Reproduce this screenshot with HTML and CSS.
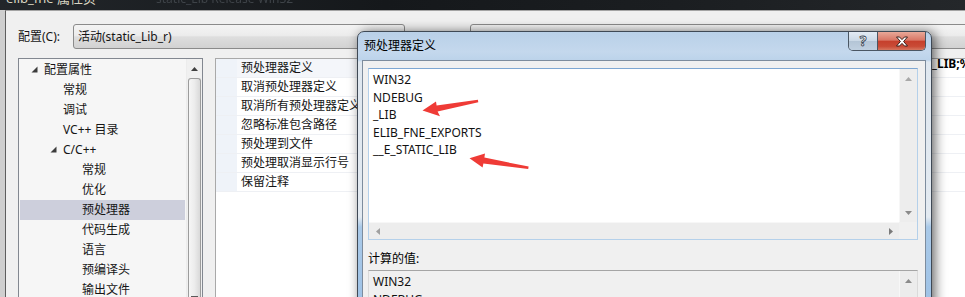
FILE: index.html
```html
<!DOCTYPE html>
<html lang="zh-CN">
<head>
<meta charset="utf-8">
<title>预处理器定义</title>
<link rel="stylesheet" href="styles.css">
</head>
<body>
<div class="titlebar">
  <span class="tb-text">elib_fne 属性页</span>
  <span class="tb-faint">static_Lib  Release  Win32</span>
</div>
<div class="window">
  <div class="config-row">
    <span class="config-label">配置(C):</span>
    <div class="combo cfg">活动(static_Lib_r)</div>
    <div class="combo plat"></div>
  </div>
  <div class="panels">
    <div class="tree">
      <div class="tree-list">
        <div class="trow l1"><span class="tog"><svg width="7" height="7" viewBox="0 0 7 7"><polygon points="6.5,0.5 6.5,6.5 0.5,6.5" fill="#3c3c3c"/></svg></span>配置属性</div>
        <div class="trow l2">常规</div>
        <div class="trow l2">调试</div>
        <div class="trow l2">VC++ 目录</div>
        <div class="trow l2t"><span class="tog"><svg width="7" height="7" viewBox="0 0 7 7"><polygon points="6.5,0.5 6.5,6.5 0.5,6.5" fill="#3c3c3c"/></svg></span>C/C++</div>
        <div class="trow l3">常规</div>
        <div class="trow l3">优化</div>
        <div class="trow l3 sel">预处理器</div>
        <div class="trow l3">代码生成</div>
        <div class="trow l3">语言</div>
        <div class="trow l3">预编译头</div>
        <div class="trow l3">输出文件</div>
      </div>
      <div class="tree-scroll">
        <div class="sb-arrow"><svg width="7" height="4" viewBox="0 0 7 4"><polygon points="0,4 3.5,0 7,4" fill="#404040"/></svg></div>
        <div class="thumb"><div class="grip"><i></i><i></i><i></i></div></div>
      </div>
    </div>
    <div class="splitter"></div>
    <div class="grid">
      <div class="prow first"><span class="gut"></span><span class="pname">预处理器定义</span><span class="pval">_LIB;%(PreprocessorDefinitions)</span></div>
      <div class="prow"><span class="gut"></span><span class="pname">取消预处理器定义</span></div>
      <div class="prow"><span class="gut"></span><span class="pname">取消所有预处理器定义</span></div>
      <div class="prow"><span class="gut"></span><span class="pname">忽略标准包含路径</span></div>
      <div class="prow"><span class="gut"></span><span class="pname">预处理到文件</span></div>
      <div class="prow"><span class="gut"></span><span class="pname">预处理取消显示行号</span></div>
      <div class="prow"><span class="gut"></span><span class="pname">保留注释</span></div>
    </div>
  </div>
</div>

<div class="dialog">
  <div class="dtitlebar">
    <span class="dtitle">预处理器定义</span>
    <div class="capbtns">
      <div class="cb help">?</div>
      <div class="cb close"><svg width="16" height="11" viewBox="0 0 16 11"><path d="M2.5 1 L5.5 1 L8 3.6 L10.5 1 L13.5 1 L9.6 5.5 L13.5 10 L10.5 10 L8 7.4 L5.5 10 L2.5 10 L6.4 5.5 Z" fill="#ffffff" stroke="#3a1f1a" stroke-width="1" stroke-linejoin="round"/></svg></div>
    </div>
  </div>
  <div class="client">
    <div class="edit">
      <div class="edit-text">
        <div>WIN32</div>
        <div>NDEBUG</div>
        <div>_LIB</div>
        <div>ELIB_FNE_EXPORTS</div>
        <div>__E_STATIC_LIB</div>
      </div>
      <div class="vscroll">
        <span class="arr"><svg width="7" height="4" viewBox="0 0 7 4"><polygon points="0,4 3.5,0 7,4" fill="#a8a8a8"/></svg></span>
        <span class="arr"><svg width="7" height="4" viewBox="0 0 7 4"><polygon points="0,0 7,0 3.5,4" fill="#8a8a8a"/></svg></span>
      </div>
      <div class="hscroll">
        <span class="arr"><svg width="4" height="7" viewBox="0 0 4 7"><polygon points="4,0 4,7 0,3.5" fill="#a0a0a0"/></svg></span>
        <span class="arr"><svg width="4" height="7" viewBox="0 0 4 7"><polygon points="0,0 4,3.5 0,7" fill="#7a7a7a"/></svg></span>
      </div>
      <div class="corner"></div>
    </div>
    <div class="calc-label">计算的值:</div>
    <div class="calc">
      <div class="calc-text">
        <div>WIN32</div>
        <div>NDEBUG</div>
        <div>_LIB</div>
      </div>
      <div class="vscroll2">
        <span class="arr"><svg width="7" height="4" viewBox="0 0 7 4"><polygon points="0,4 3.5,0 7,4" fill="#8a8a8a"/></svg></span>
      </div>
    </div>
  </div>
</div>

<svg class="marks" width="965" height="297" viewBox="0 0 965 297">
  <polygon points="422.5,110.5 436,101.6 436.6,105.4 477.9,99.8 478.3,102.2 437.6,111.4 440,116.2" fill="#ef3b36"/>
  <polygon points="469.5,158.3 485,153.6 484.4,157.6 528.6,166.6 528.2,169 483.4,163.4 482.6,167.4" fill="#ef3b36"/>
</svg>
</body>
</html>
```
FILE: styles.css
```css
* { box-sizing: border-box; }
html, body { margin: 0; }
body {
  width: 965px;
  height: 297px;
  overflow: hidden;
  position: relative;
  background: #cfcfcf;
  font-family: "Noto Sans", "Noto Sans CJK SC", sans-serif;
  font-size: 12px;
  color: #151515;
}

/* background window title bar */
.titlebar {
  height: 10px;
  overflow: hidden;
  background: linear-gradient(90deg, #22262a, #15181b 40%, #1b1e21 70%, #24272a);
  display: flex;
  white-space: nowrap;
}
.tb-text {
  display: block;
  margin: -10px 0 0 6px;
  line-height: 16px;
  font-size: 13px;
  color: #d9d5c2;
}
.tb-faint {
  display: block;
  margin: -9px 0 0 60px;
  line-height: 16px;
  font-size: 12px;
  color: #3e4348;
  filter: blur(0.6px);
}

.window {
  margin-left: 5px;
  height: 287px;
  border-left: 1px solid #5e5e5e;
  border-top: 1px solid #a4a4a4;
  background: #f0f0f0;
  padding: 13px 0 0 12px;
  overflow: hidden;
}

.config-row {
  display: flex;
  align-items: center;
  height: 25px;
  white-space: nowrap;
}
.config-label { width: 55px; flex: none; line-height: 25px; }
.combo {
  flex: none;
  height: 25px;
  border: 1px solid #8b8b8b;
  border-radius: 3px;
  background: linear-gradient(#f4f4f4, #ececec 45%, #dedede 52%, #d2d2d2);
  padding-left: 4px;
  line-height: 23px;
}
.combo.cfg { width: 332px; }
.combo.plat { width: 600px; margin-left: 65px; }

.panels {
  display: flex;
  margin-top: 9px;
  height: 260px;
}

/* tree */
.tree {
  width: 185px;
  flex: none;
  border: 1px solid #828790;
  background: #f6f6f6;
  display: flex;
}
.tree-list { flex: 1; padding: 1px 1px 0; }
.trow {
  height: 20px;
  line-height: 20px;
  display: flex;
  align-items: center;
  white-space: nowrap;
}
.trow.l1 { padding-left: 11px; }
.trow.l2 { padding-left: 43px; }
.trow.l2t { padding-left: 30px; }
.trow.l3 { padding-left: 62px; }
.trow.sel { background: #cdcfdc; }
.tog { width: 13px; flex: none; display: flex; align-items: center; padding-bottom: 2px; }

.tree-scroll {
  width: 16px;
  flex: none;
  background: #f0f0f0;
  border-left: 1px solid #ececec;
  display: flex;
  flex-direction: column;
  align-items: center;
}
.sb-arrow { height: 18px; display: flex; align-items: center; justify-content: center; padding-top: 2px; }
.thumb {
  width: 13px;
  flex: 1;
  margin-top: 1px;
  border: 1px solid #9c9c9c;
  border-bottom: none;
  border-radius: 3px 3px 0 0;
  background: linear-gradient(90deg, #f6f6f6, #ececec 50%, #d9d9d9);
  display: flex;
  flex-direction: column;
  align-items: center;
  justify-content: flex-end;
  padding-bottom: 14px;
}
.grip { display: flex; flex-direction: column; gap: 2px; }
.grip i { display: block; width: 7px; height: 1px; background: #5a5a5a; }

.splitter { width: 12px; flex: none; }

/* property grid */
.grid {
  width: 760px;
  flex: none;
  border: 1px solid #a9a9a9;
  border-right: none;
  background: #ffffff;
}
.prow {
  height: 19px;
  display: flex;
  white-space: nowrap;
  border-bottom: 1px solid #eef0f4;
}
.prow.first .pname { background: #f4f6fa; }
.gut { width: 21px; flex: none; background: #eff3f9; }
.pname { width: 300px; flex: none; padding-left: 4px; line-height: 18px; }
.pval {
  padding-left: 395px;
  font-weight: bold;
  line-height: 14px;
  margin-top: -2px;
  color: #000;
}

/* dialog */
.dialog {
  position: absolute;
  left: 357px;
  top: 31px;
  width: 575px;
  height: 280px;
  border: 1px solid #3f4955;
  border-radius: 7px 7px 0 0;
  padding: 0 5px 0 4px;
  background: linear-gradient(180deg, #b9d0e8 0, #c4d8ed 20px, #bcd3ea 28px, #dfe7ef 30px, #e3eaf1 185px, #a9c9e8 195px, #9ec2e6 100%);
  box-shadow: 3px 1px 12px rgba(0, 0, 0, 0.6);
  display: flex;
  flex-direction: column;
}
.dtitlebar {
  height: 28px;
  flex: none;
  display: flex;
  align-items: flex-start;
}
.dtitle {
  padding: 6px 0 0 2px;
  line-height: 16px;
  color: #000;
}
.capbtns {
  margin-left: auto;
  display: flex;
  height: 19px;
  border: 1px solid #4a5663;
  border-top: none;
  border-radius: 0 0 5px 5px;
  overflow: hidden;
}
.cb { height: 18px; display: flex; align-items: center; justify-content: center; }
.cb.help {
  width: 28px;
  background: linear-gradient(#e3ebf4, #cad8e6 50%, #b4c5d6 52%, #c0d0e0);
  color: #fff;
  font-weight: bold;
  font-size: 14px;
  line-height: 18px;
  -webkit-text-stroke: 0.8px #33404d;
}
.cb.close {
  width: 48px;
  border-left: 1px solid #4a5663;
  background: linear-gradient(#e9a898, #d97766 45%, #c6402d 52%, #c94b36 80%, #d67760);
}

.client {
  flex: 1;
  border: 1px solid #7d8c9d;
  border-bottom: none;
  background: #f0f0f0;
  padding: 7px 0 0 5px;
}
.edit {
  width: 550px;
  height: 172px;
  border: 1px solid #b4d0ea;
  border-top-color: #7ea7d2;
  background: #ffffff;
  display: grid;
  grid-template-columns: 1fr 18px;
  grid-template-rows: 153px 17px;
}
.edit-text {
  padding: 2px 4px;
  line-height: 17.5px;
  color: #111;
}
.vscroll {
  background: #ededed;
  border-left: 1px solid #f7f7f7;
  display: flex;
  flex-direction: column;
  justify-content: space-between;
  align-items: center;
  padding: 8px 0 7px;
}
.hscroll {
  background: #ededed;
  border-top: 1px solid #f7f7f7;
  display: flex;
  justify-content: space-between;
  align-items: center;
  padding: 0 6px 0 7px;
}
.corner { background: #f0f0f0; }
.arr { display: flex; }

.calc-label {
  margin-top: 11px;
  line-height: 16px;
  color: #000;
}
.calc {
  margin-top: 3px;
  width: 550px;
  height: 60px;
  border: 1px solid #dadada;
  border-top-color: #a5a5a5;
  background: #f0f0f0;
  display: grid;
  grid-template-columns: 1fr 18px;
}
.calc-text { padding: 2px 4px; line-height: 17.5px; color: #111; }
.vscroll2 {
  background: #ececec;
  border-left: 1px solid #f7f7f7;
  display: flex;
  justify-content: center;
  padding-top: 8px;
}

.marks {
  position: absolute;
  left: 0;
  top: 0;
  pointer-events: none;
}
```
